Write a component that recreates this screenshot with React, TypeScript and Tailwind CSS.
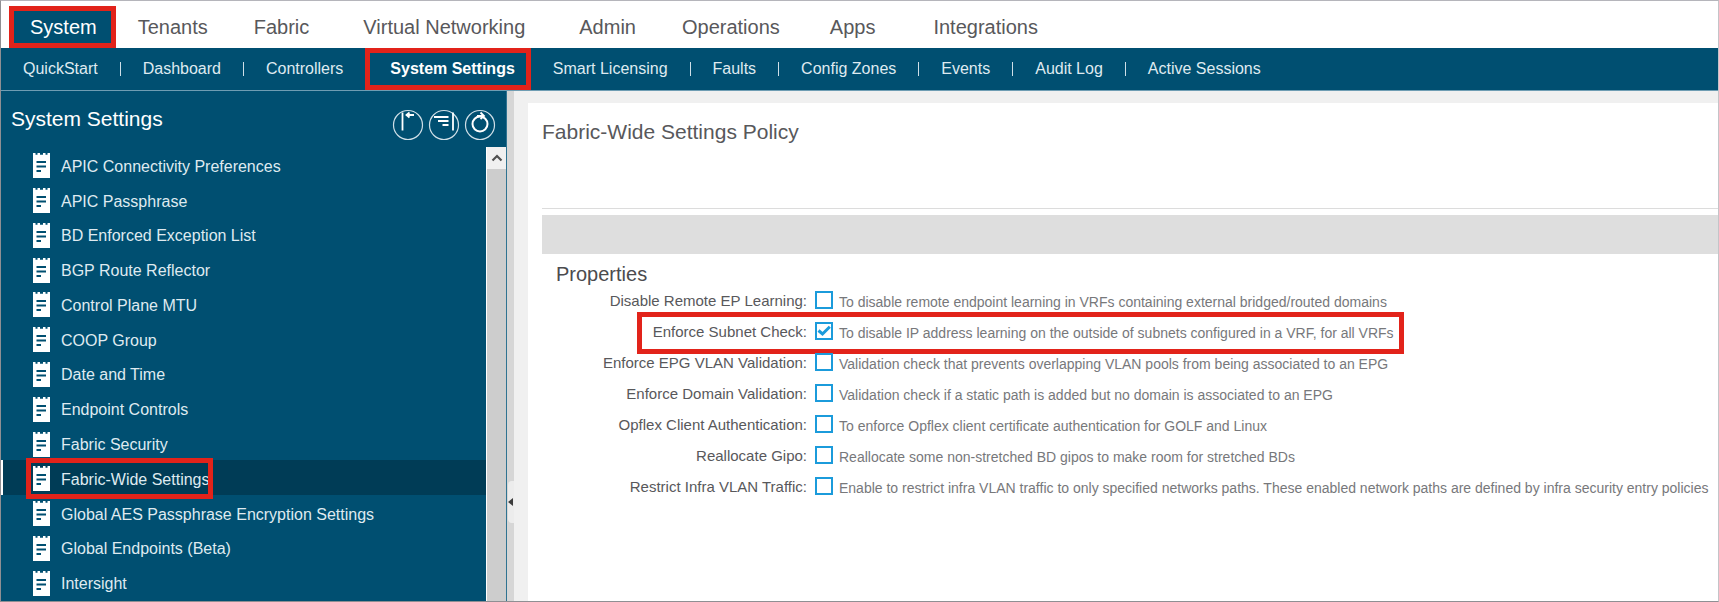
import React, { useState } from "react";

const topNav = [
  { label: "Tenants", cls: "ml-[22px]" },
  { label: "Fabric", cls: "ml-[46px]" },
  { label: "Virtual Networking", cls: "ml-[54px]" },
  { label: "Admin", cls: "ml-[54px]" },
  { label: "Operations", cls: "ml-[46px]" },
  { label: "Apps", cls: "ml-[50px]" },
  { label: "Integrations", cls: "ml-[58px]" },
];

const subNavLeft = ["QuickStart", "Dashboard", "Controllers"];
const subNavRight = ["Smart Licensing", "Faults", "Config Zones", "Events", "Audit Log", "Active Sessions"];

const treeItems = [
  "APIC Connectivity Preferences",
  "APIC Passphrase",
  "BD Enforced Exception List",
  "BGP Route Reflector",
  "Control Plane MTU",
  "COOP Group",
  "Date and Time",
  "Endpoint Controls",
  "Fabric Security",
  "Fabric-Wide Settings",
  "Global AES Passphrase Encryption Settings",
  "Global Endpoints (Beta)",
  "Intersight",
];

const properties = [
  { id: "remote-ep", label: "Disable Remote EP Learning:", text: "To disable remote endpoint learning in VRFs containing external bridged/routed domains" },
  { id: "subnet", label: "Enforce Subnet Check:", text: "To disable IP address learning on the outside of subnets configured in a VRF, for all VRFs", checked: true },
  { id: "epg-vlan", label: "Enforce EPG VLAN Validation:", text: "Validation check that prevents overlapping VLAN pools from being associated to an EPG" },
  { id: "domain", label: "Enforce Domain Validation:", text: "Validation check if a static path is added but no domain is associated to an EPG" },
  { id: "opflex", label: "Opflex Client Authentication:", text: "To enforce Opflex client certificate authentication for GOLF and Linux" },
  { id: "gipo", label: "Reallocate Gipo:", text: "Reallocate some non-stretched BD gipos to make room for stretched BDs" },
  { id: "infra-vlan", label: "Restrict Infra VLAN Traffic:", text: "Enable to restrict infra VLAN traffic to only specified networks paths. These enabled network paths are defined by infra security entry policies" },
];

function PolicyIcon() {
  return (
    <svg viewBox="0 0 17 25" className="h-[25px] w-[17px] shrink-0" aria-hidden="true">
      <path fill="#fff" d="M0 0H2.500V1.800H4.500V0H7V1.800H10V0H12.500V1.800H14.500V0H17V25H0Z" />
      <path stroke="#004f71" strokeWidth="2" fill="none" d="M3.500 9H13M3.500 13.500H13M3.500 18H8" />
    </svg>
  );
}

function CircleIcon({ children }: { children: React.ReactNode }) {
  return (
    <svg viewBox="0 0 32 32" className="size-8" fill="none" stroke="#fff" aria-hidden="true">
      <circle cx="16" cy="16" r="14.5" strokeWidth="1.200" stroke="#cfdfe7" />
      {children}
    </svg>
  );
}

function SubLink({ children }: { children: React.ReactNode }) {
  return <a href="#" className="text-[#dfeaf0]">{children}</a>;
}

function Separator() {
  return <span className="mx-[22px] h-[14px] w-px bg-[#cfdfe7]" />;
}

function Property({ item }: { item: (typeof properties)[number] }) {
  const [on, setOn] = useState(!!item.checked);
  return (
    <div className="relative flex h-[31px] w-fit items-center whitespace-nowrap">
      <label htmlFor={item.id} className="w-[265px] shrink-0 pt-0.5 text-right text-[15px] leading-5 text-[#58585b]">
        {item.label}
      </label>
      <span className="relative ml-2 flex size-[18px] shrink-0">
        <input
          id={item.id}
          type="checkbox"
          checked={on}
          onChange={(e) => setOn(e.target.checked)}
          aria-describedby={item.id + "-text"}
          className="size-[18px] appearance-none border-2 border-[#1b9bdb] bg-white"
        />
        {on && (
          <svg viewBox="0 0 18 18" className="pointer-events-none absolute inset-0" fill="none" stroke="#1b9bdb" strokeWidth="3">
            <path d="M3.500 8.500L7.500 12L14.800 4.800" />
          </svg>
        )}
      </span>
      <span id={item.id + "-text"} className="ml-[6px] pt-1 text-sm leading-5 text-[#77787b]">
        {item.text}
      </span>
      {item.checked && (
        <span className="pointer-events-none absolute -right-[10px] -bottom-2 left-[95px] h-[42px] border-[5px] border-[#e2231a]" />
      )}
    </div>
  );
}

export default function App() {
  return (
    <div className="flex min-h-screen flex-col border border-[#8f8f93] border-t-[#b5b5bb] border-r-[#c4c4c8] bg-white font-['Liberation_Sans',Arial,sans-serif]">
      <nav aria-label="Main" className="flex h-[47px] items-end text-xl whitespace-nowrap text-[#58585b]">
        <a href="#" className="ml-2 flex h-[42px] items-center border-[5px] border-[#e2231a] bg-[#004f71] pr-[14px] pl-4 text-white">
          System
        </a>
        {topNav.map((t) => (
          <a key={t.label} href="#" className={`${t.cls} flex h-[42px] items-center`}>
            {t.label}
          </a>
        ))}
      </nav>
      <nav aria-label="System" className="flex h-[43px] items-center border-b border-[#6f9db3] bg-[#004f71] pl-[22px] text-base whitespace-nowrap">
        {subNavLeft.map((s, i) => (
          <React.Fragment key={s}>
            {i > 0 && <Separator />}
            <SubLink>{s}</SubLink>
          </React.Fragment>
        ))}
        <a href="#" className="ml-[22px] flex h-[42px] items-center border-[5px] border-[#e2231a] pr-[11px] pl-5 font-bold text-white">
          System Settings
        </a>
        <span className="w-[22px]" />
        {subNavRight.map((s, i) => (
          <React.Fragment key={s}>
            {i > 0 && <Separator />}
            <SubLink>{s}</SubLink>
          </React.Fragment>
        ))}
      </nav>
      <div className="flex flex-1">
        <aside className="flex w-[506px] shrink-0 flex-col border-r border-[#2f7391] bg-[#004f71]">
          <header className="flex h-14 justify-between px-[10px]">
            <h2 className="pt-[14px] text-[21px] leading-7 text-white">System Settings</h2>
            <div className="flex items-center gap-1 pt-3">
              <button type="button" aria-label="Collapse panel" className="size-8">
                <CircleIcon>
                  <path strokeWidth="1.800" d="M10.500 3.500V21.500M14 6H22M17.500 3.500L14.500 6L17.500 8.500" />
                </CircleIcon>
              </button>
              <button type="button" aria-label="Collapse tree" className="size-8">
                <CircleIcon>
                  <path strokeWidth="1.800" d="M6 8H20.500M10 12H20.500M14.500 16H20.500M25 3.500V21.500" />
                </CircleIcon>
              </button>
              <button type="button" aria-label="Refresh" className="size-8">
                <CircleIcon>
                  <circle cx="16" cy="15" r="7.500" strokeWidth="2" />
                  <path strokeWidth="1.800" d="M13 7H20M16.500 3.500L20 7L16.500 10" />
                </CircleIcon>
              </button>
            </div>
          </header>
          <div className="flex flex-1">
            <ul className="flex flex-1 flex-col pb-0.5 text-base text-[#dfeaf0]">
              {treeItems.map((t) => {
                const sel = t === "Fabric-Wide Settings";
                return (
                  <li key={t} className={`flex max-h-9 flex-1 ${sel ? "bg-[#003c56] shadow-[inset_2px_0_0_#ffffff]" : ""}`}>
                    <a href="#" aria-current={sel ? "page" : undefined} className="relative ml-8 flex items-center pt-[3px] whitespace-nowrap">
                      <PolicyIcon />
                      <span className="ml-[11px] pt-0.5">{t}</span>
                      {sel && (
                        <span className="pointer-events-none absolute -right-[3px] -left-[7px] h-[41px] border-[5px] border-[#e2231a]" />
                      )}
                    </a>
                  </li>
                );
              })}
            </ul>
            <div className="flex w-5 flex-col border-l border-white bg-[#cdcdcd]">
              <button type="button" aria-label="Scroll up" className="flex h-[22px] items-center justify-center bg-[#f0f0f0]">
                <svg viewBox="0 0 12 8" className="h-2 w-3" fill="none" stroke="#505050" strokeWidth="2.200" aria-hidden="true">
                  <path d="M1.500 6.500L6 2L10.500 6.500" />
                </svg>
              </button>
            </div>
          </div>
        </aside>
        <div className="relative w-[7px] shrink-0 bg-[#d6d6d6]">
          <button type="button" aria-label="Collapse sidebar" className="absolute bottom-[78px] left-px flex h-[42px] w-[6px] items-center rounded-l bg-[#ececec]">
            <svg viewBox="0 0 5 8" className="h-2 w-[5px]" fill="#3c3c3c" aria-hidden="true">
              <path d="M5 0V8L0 4Z" />
            </svg>
          </button>
        </div>
        <div className="flex min-w-0 flex-1 bg-[#f0f0f0] pt-3 pl-[14px]">
          <main className="min-w-0 flex-1 bg-white pl-[14px]">
            <h1 className="h-[106px] border-b border-[#dcdcdc] pt-[15px] text-[21px] leading-7 text-[#58585b]">
              Fabric-Wide Settings Policy
            </h1>
            <div className="mt-[6px] h-[39px] bg-[#dedede]" />
            <h2 className="mt-[6px] ml-[14px] text-xl leading-7 text-[#4b4b4e]">Properties</h2>
            <div className="-mt-1">
              {properties.map((p) => (
                <Property key={p.id} item={p} />
              ))}
            </div>
          </main>
        </div>
      </div>
    </div>
  );
}
